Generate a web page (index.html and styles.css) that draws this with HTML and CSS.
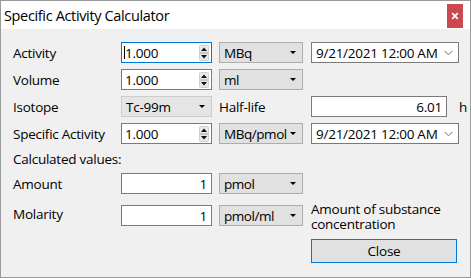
FILE: index.html
```html
<!DOCTYPE html>
<html>
<head>
<meta charset="utf-8">
<link rel="stylesheet" href="styles.css">
</head>
<body>
<div class="window">
  <div class="titlebar">
    <span class="title">Specific Activity Calculator</span>
    <span class="close-x"><svg width="8" height="8" viewBox="0 0 8 8"><path d="M1.2 1.2 L6.8 6.8 M6.8 1.2 L1.2 6.8" stroke="#fff" stroke-width="1.7"/></svg></span>
  </div>
  <div class="client">
    <div class="row r1">
      <span class="label">Activity</span>
      <div class="box spin focused"><span class="caret"></span><span class="val">1.000</span>
        <svg class="spinner" width="10" height="16" viewBox="0 0 10 16"><rect x="0.5" y="0.5" width="9" height="15" rx="1" fill="#e9e9e9" stroke="#cfcfcf"/><line x1="1" y1="8" x2="9" y2="8" stroke="#a8a8a8"/><path d="M2 6 L5 2.5 L8 6 Z" fill="#111"/><path d="M2 10 L5 13.5 L8 10 Z" fill="#111"/></svg>
      </div>
      <div class="combo"><span>MBq</span><span class="tri"></span></div>
      <div class="box date"><span>9/21/2021 12:00 AM</span><svg class="chev" width="9" height="6" viewBox="0 0 9 6"><path d="M0.5 0.8 L4.5 4.8 L8.5 0.8" fill="none" stroke="#6d6d6d" stroke-width="1"/></svg></div>
    </div>
    <div class="row">
      <span class="label">Volume</span>
      <div class="box spin"><span class="val">1.000</span>
        <svg class="spinner" width="10" height="16" viewBox="0 0 10 16"><rect x="0.5" y="0.5" width="9" height="15" rx="1" fill="#e9e9e9" stroke="#cfcfcf"/><line x1="1" y1="8" x2="9" y2="8" stroke="#a8a8a8"/><path d="M2 6 L5 2.5 L8 6 Z" fill="#111"/><path d="M2 10 L5 13.5 L8 10 Z" fill="#111"/></svg>
      </div>
      <div class="combo"><span>ml</span><span class="tri"></span></div>
    </div>
    <div class="row">
      <span class="label">Isotope</span>
      <div class="combo wide"><span>Tc-99m</span><span class="tri"></span></div>
      <span class="label">Half-life</span>
      <div class="hl"><div class="box num"><span>6.01</span></div><span class="unit">h</span></div>
    </div>
    <div class="row">
      <span class="label">Specific Activity</span>
      <div class="box spin"><span class="val">1.000</span>
        <svg class="spinner" width="10" height="16" viewBox="0 0 10 16"><rect x="0.5" y="0.5" width="9" height="15" rx="1" fill="#e9e9e9" stroke="#cfcfcf"/><line x1="1" y1="8" x2="9" y2="8" stroke="#a8a8a8"/><path d="M2 6 L5 2.5 L8 6 Z" fill="#111"/><path d="M2 10 L5 13.5 L8 10 Z" fill="#111"/></svg>
      </div>
      <div class="combo"><span>MBq/pmol</span><span class="tri"></span></div>
      <div class="box date"><span>9/21/2021 12:00 AM</span><svg class="chev" width="9" height="6" viewBox="0 0 9 6"><path d="M0.5 0.8 L4.5 4.8 L8.5 0.8" fill="none" stroke="#6d6d6d" stroke-width="1"/></svg></div>
    </div>
    <div class="row calc">
      <span class="label">Calculated values:</span>
    </div>
    <div class="row amount">
      <span class="label">Amount</span>
      <div class="box num small"><span>1</span></div>
      <div class="combo"><span>pmol</span><span class="tri"></span></div>
    </div>
    <div class="row molarity">
      <span class="label">Molarity</span>
      <div class="box num small"><span>1</span></div>
      <div class="combo"><span>pmol/ml</span><span class="tri"></span></div>
      <span class="note">Amount of substance concentration</span>
    </div>
    <div class="row buttons">
      <button class="btn">Close</button>
    </div>
  </div>
</div>
</body>
</html>
```
FILE: styles.css
```css
* { box-sizing: border-box; }
html, body { margin: 0; padding: 0; }
body {
  width: 471px;
  height: 278px;
  font-family: "Open Sans", "Noto Sans", sans-serif;
  font-size: 13.5px;
  letter-spacing: -0.25px;
  color: #000;
  background: #fff;
}
.window {
  width: 471px;
  height: 278px;
  border: 1px solid #9a9a9a;
  display: flex;
  flex-direction: column;
  background: #f0f0f0;
}
.titlebar {
  height: 28px;
  background: #fff;
  display: flex;
  align-items: center;
  justify-content: space-between;
  padding-left: 3px;
  padding-right: 7px;
  flex: none;
}
.title {
  font-size: 14.5px;
  letter-spacing: -0.35px;
}
.close-x {
  width: 16px;
  height: 24px;
  background: #c9494f;
  display: flex;
  align-items: center;
  justify-content: center;
  margin-top: 1px;
}
.client {
  flex: 1;
  padding: 13px 0 0 12px;
}
.row {
  display: grid;
  grid-template-columns: 108px 98px 92px 156px;
  align-items: center;
  height: 21px;
  margin-bottom: 6px;
}
.label { white-space: nowrap; }
.box {
  height: 21px;
  background: #fff;
  border: 1px solid #7a7a7a;
  display: flex;
  align-items: center;
  padding: 0 3px;
  white-space: nowrap;
}
.spin { width: 91px; position: relative; justify-content: space-between; padding-right: 2px; }
.spin.focused { border-color: #0078d7; }
.caret {
  position: absolute;
  left: 2px;
  top: 3px;
  width: 1px;
  height: 13px;
  background: #000;
}
.spinner { display: block; }
.combo {
  width: 84px;
  height: 21px;
  background: #e1e1e1;
  border: 1px solid #adadad;
  display: flex;
  align-items: center;
  justify-content: space-between;
  padding: 0 6px 0 4px;
  white-space: nowrap;
  letter-spacing: -0.45px;
}
.combo.wide { width: 91px; border-color: #cccccc; background: #e5e5e5; letter-spacing: -0.25px; }
.tri {
  width: 0;
  height: 0;
  flex: none;
  border-left: 3px solid transparent;
  border-right: 3px solid transparent;
  border-top: 3px solid #000;
}
.date { width: 148px; justify-content: space-between; padding: 0 5px 0 4px; }
.chev { display: block; }
.hl { display: flex; align-items: center; gap: 12px; }
.num { width: 137px; justify-content: flex-end; padding-right: 4px; }
.num.small { width: 91px; }
.calc { height: 18px; margin-top: 0; margin-bottom: 5px; }
.amount { margin-bottom: 11px; }
.molarity { height: 34px; align-items: start; margin-bottom: 0; }
.note {
  width: 150px;
  line-height: 15px;
  margin-top: -3px;
}
.buttons { height: 24px; }
.btn {
  grid-column: 4;
  width: 146px;
  height: 24px;
  background: #e1e1e1;
  border: 1px solid #0078d7;
  font-family: inherit;
  font-size: 13.5px;
  letter-spacing: -0.25px;
  padding: 0;
  margin: 0;
  color: #000;
}
```
